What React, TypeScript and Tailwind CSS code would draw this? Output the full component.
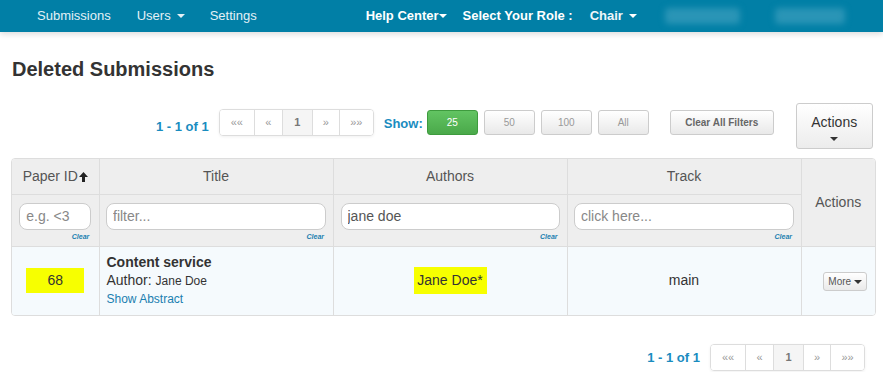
import { useState } from 'react';

const font = { fontFamily: '"Liberation Sans", Arial, sans-serif' };

function Caret({ className = '' }: { className?: string }) {
  return <span className={`inline-block w-0 h-0 border-x-[4px] border-x-transparent border-t-[4px] align-middle ${className}`} />;
}

function Pager() {
  const cells = ['««', '«', '1', '»', '»»'];
  const widths = ['w-[34px]', 'w-[28px]', 'w-[30px]', 'w-[27px]', 'w-[34px]'];
  return (
    <div className="flex h-[27px] border border-[#ddd] rounded-[4px] overflow-hidden shadow-[0_1px_3px_rgba(0,0,0,0.06)]">
      {cells.map((c, i) => (
        <div
          key={i}
          className={`${widths[i]} flex items-center justify-center text-[11px] ${i > 0 ? 'border-l border-[#ddd]' : ''} ${c === '1' ? 'bg-[#f5f5f5] text-[#777] font-bold' : 'bg-white text-[#999]'}`}
        >
          {c}
        </div>
      ))}
    </div>
  );
}

function PageInfo() {
  return <span className="text-[13px] font-bold text-[#1a8cbf] whitespace-nowrap">1 - 1 of 1</span>;
}

function ShowBtn({ label, active }: { label: string; active?: boolean }) {
  return (
    <button
      className={`w-[51px] h-[25px] rounded-[3px] text-[10px] border ${
        active
          ? 'bg-gradient-to-b from-[#62c462] to-[#4aa94a] border-[#3e9b3e] text-white'
          : 'bg-gradient-to-b from-white to-[#e9e9e9] border-[#ccc] text-[#999]'
      }`}
    >
      {label}
    </button>
  );
}

function Filter({ placeholder, value, clear = true, w }: { placeholder: string; value?: string; clear?: boolean; w: string }) {
  const [v, setV] = useState(value ?? '');
  return (
    <div className={`${w} mx-auto`}>
      <input
        value={v}
        onChange={e => setV(e.target.value)}
        placeholder={placeholder}
        className="w-full h-[27px] rounded-[8px] border border-[#ccc] bg-white px-[6px] text-[14px] text-[#555] placeholder:text-[#888] outline-none"
      />
      <div className="h-[14px] text-right text-[7px] font-bold italic text-[#1a7fb0] leading-[14px] pr-[2px]">{clear ? 'Clear' : ''}</div>
    </div>
  );
}

function SortUp() {
  return (
    <svg width="9" height="10" viewBox="0 0 9 10" className="inline-block ml-[1px] align-[-1px]">
      <path d="M4.5 0 L9 5 H6 V10 H3 V5 H0 Z" fill="#222" />
    </svg>
  );
}

export default function App() {
  return (
    <div className="w-[883px] h-[372px] bg-white overflow-hidden text-[#333]" style={font}>
      <nav className="h-[32px] bg-[#017fa6] flex items-center text-[13px] shadow-[0_2px_6px_rgba(0,0,0,0.15)] relative whitespace-nowrap">
        <span className="ml-[37px] text-[#e3f1f6]">Submissions</span>
        <span className="ml-[26px] text-[#e3f1f6] flex items-center gap-[6px]">Users <Caret className="border-t-[#e3f1f6]" /></span>
        <span className="ml-[25px] text-[#e3f1f6]">Settings</span>
        <span className="ml-[109px] font-bold text-white flex items-center">Help Center<Caret className="border-t-white" /></span>
        <span className="ml-[16px] font-bold text-white">Select Your Role :</span>
        <span className="ml-[17px] font-bold text-[#eef7fa] flex items-center gap-[6px]">Chair <Caret className="border-t-white" /></span>
        <span className="ml-[28px] w-[75px] h-[16px] rounded bg-[#2a95b6] blur-[3px]" />
        <span className="ml-[35px] w-[70px] h-[16px] rounded bg-[#2a95b6] blur-[3px]" />
      </nav>

      <h1 className="ml-[12px] mt-[25px] text-[20px] font-bold text-[#333] leading-[24px]">Deleted Submissions</h1>

      <div className="flex items-start ml-[156px] mt-[22px] h-[46px]">
        <div className="mt-[11px]"><PageInfo /></div>
        <div className="ml-[10px] mt-[6px]"><Pager /></div>
        <span className="ml-[10px] mt-[11px] text-[13px] font-bold text-[#1a8cbf]">Show:</span>
        <div className="ml-[4px] mt-[7px] flex gap-[6px]">
          <ShowBtn label="25" active />
          <ShowBtn label="50" />
          <ShowBtn label="100" />
          <ShowBtn label="All" />
        </div>
        <button className="ml-[21px] mt-[7px] w-[104px] h-[25px] rounded-[3px] border border-[#ccc] bg-gradient-to-b from-white to-[#e9e9e9] text-[10px] font-bold text-[#666] whitespace-nowrap">
          Clear All Filters
        </button>
        <button className="ml-[22px] w-[77px] h-[46px] rounded-[3px] border border-[#ccc] bg-gradient-to-b from-white to-[#ececec] text-[14px] text-[#333] flex flex-col items-center justify-center gap-[4px]">
          <span>Actions</span>
          <Caret className="border-t-[#333]" />
        </button>
      </div>

      <div className="ml-[11px] mt-[9px] w-[865px] border border-[#ddd] rounded-[4px] overflow-hidden">
        <table className="w-full border-collapse table-fixed text-[14px]">
          <colgroup>
            <col className="w-[87px]" />
            <col className="w-[234px]" />
            <col className="w-[234px]" />
            <col className="w-[234px]" />
            <col />
          </colgroup>
          <thead>
            <tr className="bg-[#eee] h-[35px] text-[#555]">
              <th className="font-normal border-r border-b border-[#ddd] whitespace-nowrap">
                Paper ID<SortUp />
              </th>
              <th className="font-normal border-r border-b border-[#ddd]">Title</th>
              <th className="font-normal border-r border-b border-[#ddd]">Authors</th>
              <th className="font-normal border-r border-b border-[#ddd]">Track</th>
              <th rowSpan={2} className="font-normal border-b border-[#ddd] text-[#555]">Actions</th>
            </tr>
            <tr className="bg-[#eee] h-[52px]">
              <td className="border-r border-b border-[#ddd] pt-[8px] align-top"><Filter w="w-[72px]" placeholder="e.g. <3" /></td>
              <td className="border-r border-b border-[#ddd] pt-[8px] align-top"><Filter w="w-[220px]" placeholder="filter..." /></td>
              <td className="border-r border-b border-[#ddd] pt-[8px] align-top"><Filter w="w-[219px]" placeholder="" value="jane doe" /></td>
              <td className="border-r border-b border-[#ddd] pt-[8px] align-top"><Filter w="w-[220px]" placeholder="click here..." /></td>
            </tr>
          </thead>
          <tbody>
            <tr className="bg-[#f5fafd] h-[69px]">
              <td className="border-r border-[#ddd] text-center">
                <span className="inline-block w-[58px] h-[25px] leading-[25px] bg-[#f7ff00] text-[#333]">68</span>
              </td>
              <td className="border-r border-[#ddd] px-[7px] align-middle">
                <div className="font-bold text-[#333] leading-[18px]">Content service</div>
                <div className="leading-[18px]">Author: <span className="text-[12px]">Jane Doe</span></div>
                <div className="text-[12px] text-[#1a7fb0] leading-[18px]">Show Abstract</div>
              </td>
              <td className="border-r border-[#ddd] text-center">
                <span className="inline-block w-[73px] h-[27px] leading-[27px] bg-[#f7ff00] text-[#333]">Jane Doe*</span>
              </td>
              <td className="border-r border-[#ddd] text-center text-[#333]">main</td>
              <td className="text-center pl-[14px]">
                <button className="inline-flex items-center gap-[3px] h-[19px] px-[4px] rounded-[3px] border border-[#ccc] bg-gradient-to-b from-white to-[#eaeaea] text-[10px] text-[#555]">
                  More <Caret className="border-t-[#333]" />
                </button>
              </td>
            </tr>
          </tbody>
        </table>
      </div>

      <div className="flex items-center justify-end mr-[18px] mt-[28px]">
        <PageInfo />
        <div className="ml-[10px]"><Pager /></div>
      </div>
    </div>
  );
}
